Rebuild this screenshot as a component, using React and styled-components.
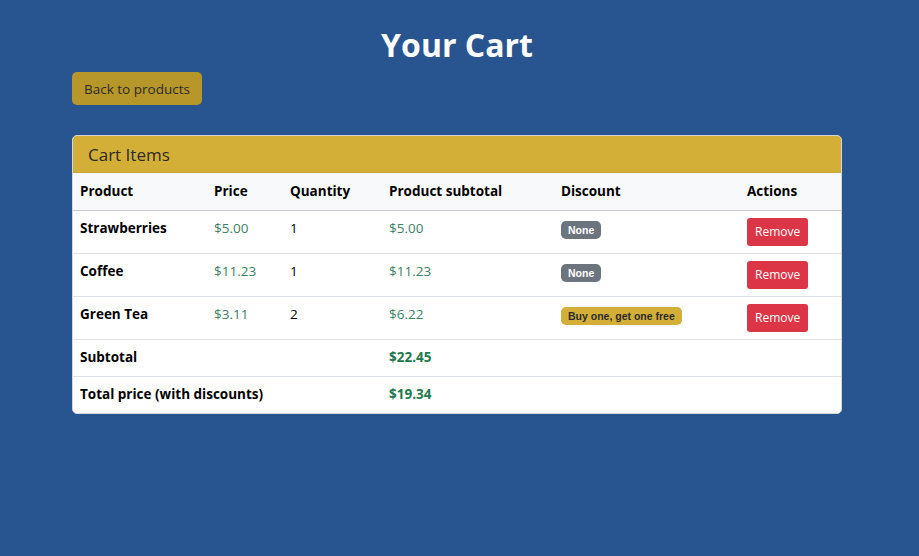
import React from "react";
import styled, { createGlobalStyle } from "styled-components";

const GlobalStyle = createGlobalStyle`
  *, *:before, *:after { box-sizing: border-box; }
  body {
    margin: 0;
    background: #285590;
    font-family: "Segoe UI", "Open Sans", "Noto Sans", sans-serif;
    font-size: 13.5px;
    color: #212529;
  }
`;

const Page = styled.div`
  width: 770px;
  margin-left: 72px;
  padding-top: 24px;
`;

const Title = styled.h1`
  margin: 0 0 6px;
  text-align: center;
  color: #ffffff;
  font-size: 32px;
  font-weight: 700;
  line-height: 42px;
`;

const BackButton = styled.button`
  display: inline-block;
  height: 33px;
  padding: 0 12px;
  border: none;
  border-radius: 5px;
  background: #b8972a;
  color: #2b2b2b;
  font-family: inherit;
  font-size: 13.5px;
  cursor: pointer;
`;

const Card = styled.div`
  margin-top: 30px;
  background: #fff;
  border: 1px solid #d6d6d6;
  border-radius: 5px;
  overflow: hidden;
`;

const CardHeader = styled.div`
  height: 37px;
  padding: 0 15px;
  display: flex;
  align-items: center;
  background: #d4af37;
  color: #2a2a2a;
  font-size: 17px;
  border-bottom: 1px solid #c9a634;
`;

const Table = styled.table`
  width: 100%;
  border-collapse: collapse;
  table-layout: fixed;
`;

const Th = styled.th`
  width: ${(p) => p.w}px;
  text-align: left;
  padding: 0 7px;
  height: 37px;
  background: #f8f9fa;
  font-weight: 700;
  color: #000;
  border-bottom: 1px solid #c8c8c8;
`;

const Td = styled.td`
  padding: 6px 7px 0;
  height: ${(p) => (p.short ? 37 : 43)}px;
  vertical-align: top;
  line-height: 22px;
  border-top: ${(p) => (p.first ? "none" : "1px solid #dee2e6")};
  font-weight: ${(p) => (p.bold ? 700 : 400)};
  color: ${(p) => (p.green ? (p.bold ? "#1d7a4c" : "#3b7f66") : "#000")};
`;

const Badge = styled.span`
  display: inline-block;
  margin-top: 4px;
  padding: 3px 7px;
  border-radius: 5px;
  font-family: "Liberation Sans", Arial, sans-serif;
  font-size: 10.5px;
  font-weight: 700;
  line-height: 12px;
  background: ${(p) => (p.warn ? "#d4af37" : "#6c757d")};
  color: ${(p) => (p.warn ? "#2a2a2a" : "#fff")};
`;

const RemoveButton = styled.button`
  height: 28px;
  margin-top: 1px;
  padding: 0 8px;
  border: none;
  border-radius: 3px;
  background: #dc3545;
  color: #fff;
  font-family: inherit;
  font-size: 12px;
`;

const items = [
  { name: "Strawberries", price: "$5.00", qty: 1, sub: "$5.00", discount: null },
  { name: "Coffee", price: "$11.23", qty: 1, sub: "$11.23", discount: null },
  { name: "Green Tea", price: "$3.11", qty: 2, sub: "$6.22", discount: "Buy one, get one free" },
];

export default function App() {
  return (
    <>
      <GlobalStyle />
      <Page>
        <Title>Your Cart</Title>
        <BackButton>Back to products</BackButton>
        <Card>
          <CardHeader>Cart Items</CardHeader>
          <Table>
            <thead>
              <tr>
                <Th w={134}>Product</Th>
                <Th w={76}>Price</Th>
                <Th w={99}>Quantity</Th>
                <Th w={172}>Product subtotal</Th>
                <Th w={186}>Discount</Th>
                <Th>Actions</Th>
              </tr>
            </thead>
            <tbody>
              {items.map((it, i) => (
                <tr key={it.name}>
                  <Td first={i === 0} bold>{it.name}</Td>
                  <Td first={i === 0} green>{it.price}</Td>
                  <Td first={i === 0}>{it.qty}</Td>
                  <Td first={i === 0} green>{it.sub}</Td>
                  <Td first={i === 0}>
                    {it.discount ? <Badge warn>{it.discount}</Badge> : <Badge>None</Badge>}
                  </Td>
                  <Td first={i === 0}>
                    <RemoveButton>Remove</RemoveButton>
                  </Td>
                </tr>
              ))}
              <tr>
                <Td short bold colSpan={3}>Subtotal</Td>
                <Td short bold green colSpan={3}>$22.45</Td>
              </tr>
              <tr>
                <Td short bold colSpan={3}>Total price (with discounts)</Td>
                <Td short bold green colSpan={3}>$19.34</Td>
              </tr>
            </tbody>
          </Table>
        </Card>
      </Page>
    </>
  );
}
